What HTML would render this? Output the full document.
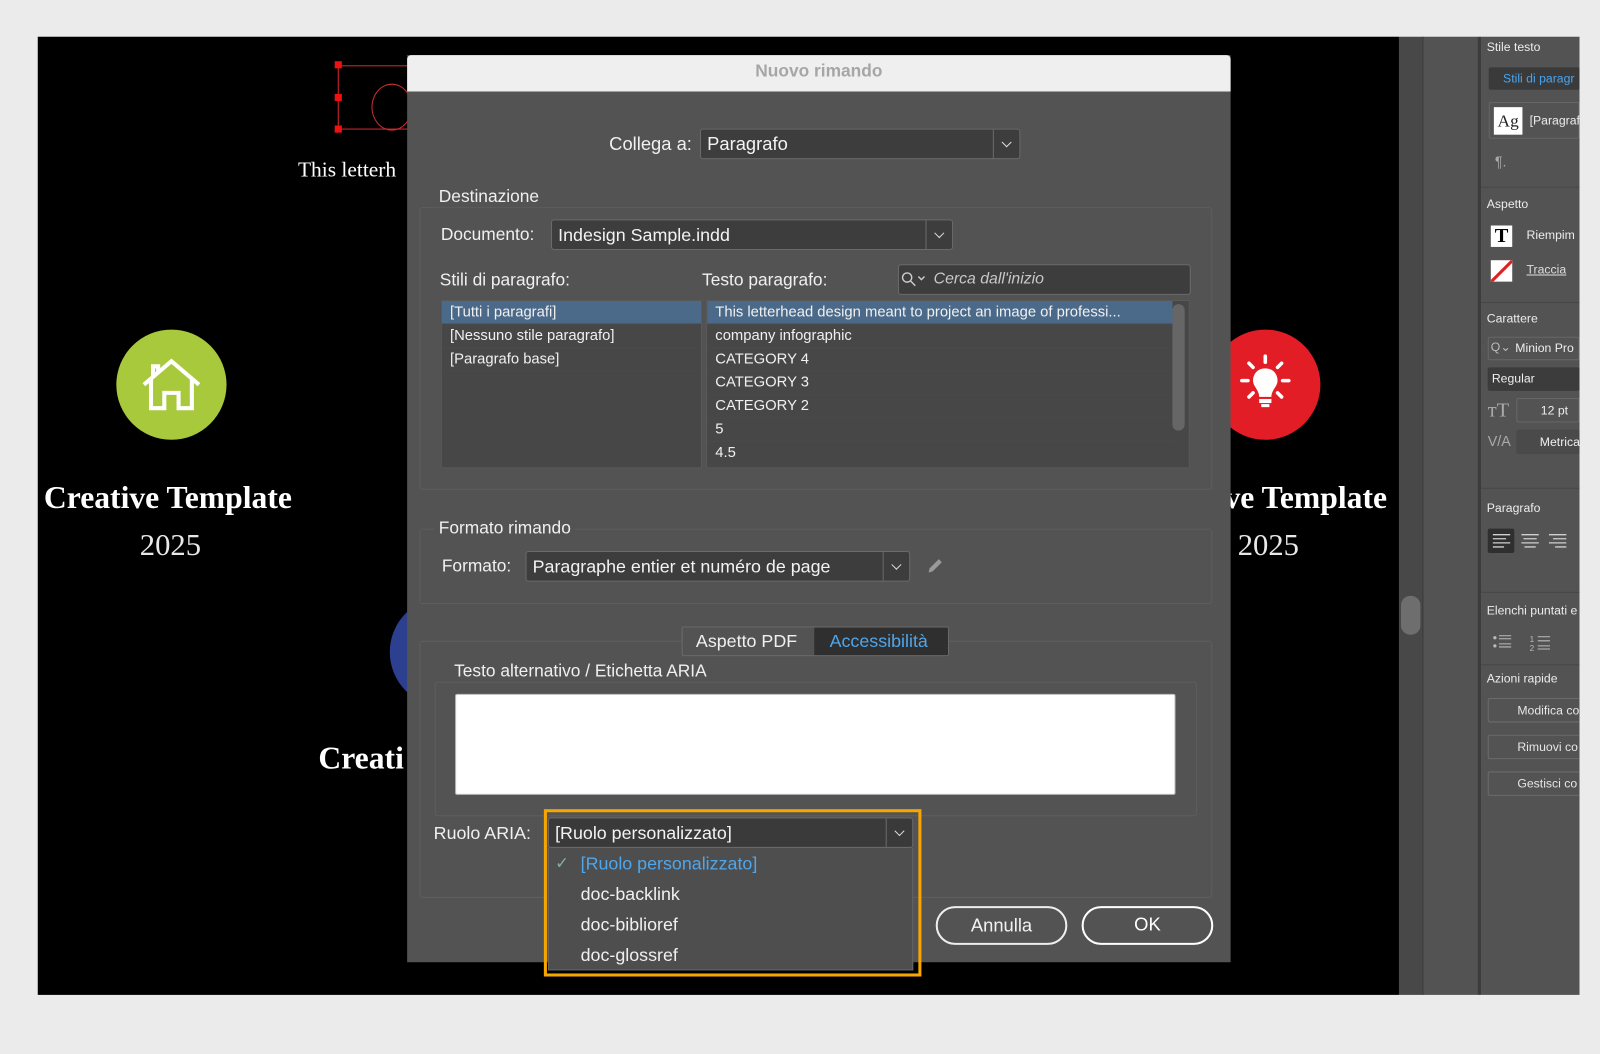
<!DOCTYPE html>
<html><head><meta charset="utf-8"><style>
*{box-sizing:border-box;margin:0;padding:0}
body{width:1600px;height:1033px;background:#ebebeb;position:relative;overflow:hidden;font-family:"Liberation Sans",sans-serif;}
#w{position:absolute;left:0;top:0;width:1568px;height:1013px;transform:scale(1.0204);transform-origin:0 0}
.a{position:absolute}
.ui{font-family:"Liberation Sans",sans-serif;color:#f0f0f0;white-space:nowrap}
.serif{font-family:"Liberation Serif",serif;color:#fff;white-space:nowrap}
.fld{position:absolute;background:#3d3d3d;border:1px solid #6a6a6a;border-radius:3px;color:#f3f3f3;font-size:17px;padding-left:6px;line-height:28px;white-space:nowrap}
.dd{position:absolute;right:0;top:0;bottom:0;width:26px;border-left:1px solid #6a6a6a;}
.dd:after{content:"";position:absolute;left:9px;top:9px;width:6px;height:6px;border-right:1.5px solid #ddd;border-bottom:1.5px solid #ddd;transform:rotate(45deg)}
.box{position:absolute;border:1px solid #5e5e5e;border-radius:3px}
.row{height:23px;line-height:23px;font-size:14.5px;color:#f0f0f0;border-bottom:1px solid #4a4a4a;padding-left:8px;white-space:nowrap}
.pbtn{position:absolute;left:1458px;width:100px;height:24px;border:1px solid #6b6b6b;border-radius:2px;color:#e6e6e6;font-size:12px;line-height:22px;padding-left:28px;white-space:nowrap}
.pl{position:absolute;left:1457px;font-size:12px;color:#ececec;white-space:nowrap}
</style></head><body><div id="w">
<div class="a" style="left:37px;top:36px;width:1334px;height:939px;background:#000"></div>
<div class="a" style="left:331px;top:64px;width:80px;height:63px;border:1px solid #d42a2a;border-right:none"></div>
<div class="a" style="left:328px;top:60px;width:7px;height:7px;background:#f01010"></div>
<div class="a" style="left:328px;top:92px;width:7px;height:7px;background:#f01010"></div>
<div class="a" style="left:328px;top:123px;width:7px;height:7px;background:#f01010"></div>
<div class="a" style="left:364px;top:82px;width:40px;height:46px;border:1px solid #c83030;border-radius:50%"></div>
<div class="a serif" style="left:292px;top:154px;font-size:21px">This letterh</div>
<div class="a" style="left:114px;top:323px;width:108px;height:108px;border-radius:50%;background:#a8c93c"></div>
<svg class="a" style="left:136px;top:350px" width="64" height="54" viewBox="0 0 64 54"><path d="M5 27 L32 4 L59 27 M12 21 V50 H25 V35 H39 V50 H52 V21 M14 19 V9 H19 V14" fill="none" stroke="#fff" stroke-width="4" stroke-linejoin="miter"/></svg>
<div class="a serif" style="left:43px;top:470px;font-size:31px;font-weight:bold">Creative Template</div>
<div class="a serif" style="left:137px;top:518px;font-size:30px;font-weight:100;color:#e8e8e8">2025</div>
<div class="a" style="left:382px;top:585px;width:108px;height:108px;border-radius:50%;background:#2d3f8f"></div>
<div class="a serif" style="left:312px;top:725px;font-size:31px;font-weight:bold">Creati</div>
<div class="a" style="left:1186px;top:323px;width:108px;height:108px;border-radius:50%;background:#e31d25"></div>
<svg class="a" style="left:1212px;top:345px" width="56" height="60" viewBox="0 0 56 60"><g stroke="#fff" stroke-width="3.5" stroke-linecap="round"><line x1="28" y1="4" x2="28" y2="10"/><line x1="12" y1="11" x2="16" y2="15"/><line x1="44" y1="11" x2="40" y2="15"/><line x1="5" y1="28" x2="11" y2="28"/><line x1="45" y1="28" x2="51" y2="28"/><line x1="12" y1="44" x2="16" y2="40"/><line x1="44" y1="44" x2="40" y2="40"/></g><path d="M28 16 C20 16 16 22 16 28 C16 34 22 37 22 44 H34 C34 37 40 34 40 28 C40 22 36 16 28 16Z" fill="#fff"/><rect x="22" y="46" width="12" height="4" fill="#fff"/><rect x="24" y="51" width="8" height="3" fill="#fff"/></svg>
<div class="a serif" style="left:1200px;top:470px;font-size:31px;font-weight:bold">ve Template</div>
<div class="a serif" style="left:1213px;top:518px;font-size:30px;font-weight:100;color:#e8e8e8">2025</div>

<div class="a" style="left:1371px;top:36px;width:24px;height:939px;background:#484848;border-right:1px solid #3a3a3a"></div>
<div class="a" style="left:1373px;top:584px;width:19px;height:38px;border-radius:9px;background:#6e6e6e"></div>
<div class="a" style="left:1395px;top:36px;width:53px;height:939px;background:#535353"></div>
<div class="a" style="left:1448px;top:36px;width:4px;height:939px;background:#3c3c3c"></div>
<div class="a" style="left:1452px;top:36px;width:96px;height:939px;background:#535353"></div>
<div class="pl" style="top:39px">Stile testo</div>
<div class="a" style="left:1459px;top:66px;width:89px;height:22px;background:#3a3a3a;border-radius:2px;color:#4aa4ee;font-size:12px;line-height:22px;padding-left:14px;white-space:nowrap;overflow:hidden">Stili di paragr</div>
<div class="a" style="left:1459px;top:100px;width:89px;height:36px;border:1px solid #666;border-radius:2px"></div>
<div class="a" style="left:1464px;top:105px;width:28px;height:27px;background:#fff;color:#222;font-family:'Liberation Serif',serif;font-size:17px;text-align:center;line-height:27px">Ag</div>
<div class="pl" style="left:1499px;top:111px">[Paragraf</div>
<div class="pl" style="left:1465px;top:150px;color:#aaa;font-size:14px">¶.</div>
<div class="a" style="left:1452px;top:183px;width:96px;height:1px;background:#474747"></div>
<div class="pl" style="top:193px">Aspetto</div>
<div class="a" style="left:1461px;top:221px;width:21px;height:21px;background:#fff;color:#000;font-family:'Liberation Serif',serif;font-weight:bold;font-size:20px;text-align:center;line-height:21px">T</div>
<div class="pl" style="left:1496px;top:223px">Riempim</div>
<div class="a" style="left:1461px;top:255px;width:21px;height:21px;background:#fff;overflow:hidden"><div style="position:absolute;left:-4px;top:9px;width:30px;height:3px;background:#e02020;transform:rotate(-45deg)"></div></div>
<div class="pl" style="left:1496px;top:257px;text-decoration:underline;color:#ddd">Traccia</div>
<div class="a" style="left:1452px;top:296px;width:96px;height:1px;background:#474747"></div>
<div class="pl" style="top:305px">Carattere</div>
<div class="a" style="left:1458px;top:330px;width:90px;height:23px;border:1px solid #666;border-radius:2px;color:#eee;font-size:12px;line-height:21px;padding-left:26px;white-space:nowrap">Minion Pro</div>
<div class="pl" style="left:1461px;top:333px;color:#bbb">Q⌄</div>
<div class="a" style="left:1458px;top:360px;width:90px;height:23px;background:#3c3c3c;border-radius:2px;color:#eee;font-size:12px;line-height:23px;padding-left:4px">Regular</div>
<div class="pl" style="left:1458px;top:391px;font-family:'Liberation Serif',serif;font-size:20px;color:#aaa">ᴛT</div>
<div class="a" style="left:1486px;top:390px;width:62px;height:24px;border:1px solid #666;border-radius:2px;color:#eee;font-size:12px;line-height:22px;padding-left:23px">12 pt</div>
<div class="pl" style="left:1458px;top:424px;color:#aaa;font-size:14px">V/A</div>
<div class="a" style="left:1486px;top:421px;width:62px;height:24px;border-radius:2px;background:#4a4a4a;color:#eee;font-size:12px;line-height:24px;padding-left:23px">Metrica</div>
<div class="a" style="left:1452px;top:478px;width:96px;height:1px;background:#474747"></div>
<div class="pl" style="top:491px">Paragrafo</div>
<div class="a" style="left:1458px;top:518px;width:26px;height:24px;background:#2f2f2f;border-radius:2px"></div>
<svg class="a" style="left:1462px;top:522px" width="86" height="16"><g stroke="#cfcfcf" stroke-width="1.3"><path d="M1 2h17M1 6h13M1 10h17M1 14h11"/><path d="M29 2h17M31 6h13M29 10h17M32 14h11"/><path d="M56 2h17M60 6h13M56 10h17M62 14h11"/></g></svg>
<div class="a" style="left:1452px;top:580px;width:96px;height:1px;background:#474747"></div>
<div class="pl" style="top:591px">Elenchi puntati e</div>
<svg class="a" style="left:1462px;top:620px" width="60" height="20"><g fill="#bbb"><circle cx="3" cy="5" r="1.6"/><circle cx="3" cy="13" r="1.6"/></g><g stroke="#bbb" stroke-width="1"><path d="M7 3h12M7 6h12M7 11h12M7 14h12M45 4h12M45 8h12M45 13h12M45 16h12"/></g><text x="37" y="9" font-size="8" fill="#bbb" font-family="Liberation Sans">1</text><text x="37" y="18" font-size="8" fill="#bbb" font-family="Liberation Sans">2</text></svg>
<div class="a" style="left:1452px;top:651px;width:96px;height:1px;background:#474747"></div>
<div class="pl" style="top:658px">Azioni rapide</div>
<div class="pbtn" style="top:684px">Modifica co</div>
<div class="pbtn" style="top:720px">Rimuovi co</div>
<div class="pbtn" style="top:756px">Gestisci co</div>
<div class="a" style="left:1548px;top:36px;width:52px;height:997px;background:#ebebeb"></div>

<div class="a" style="left:399px;top:54px;width:807px;height:889px;background:#535353"></div>
<div class="a" style="left:399px;top:54px;width:807px;height:36px;background:#efefef;border-radius:4px 4px 0 0;border-bottom:1px solid #bbb;text-align:center;line-height:32px;font-size:17px;font-weight:bold;color:#a6a6a6">Nuovo rimando</div>

<div class="a ui" style="left:597px;top:131px;font-size:18px">Collega a:</div>
<div class="fld" style="left:686px;top:126px;width:314px;height:30px;font-size:18px">Paragrafo<div class="dd"></div></div>

<div class="box" style="left:411px;top:203px;width:777px;height:277px"></div>
<div class="a ui" style="left:426px;top:183px;font-size:17px;background:#535353;padding:0 4px">Destinazione</div>
<div class="a ui" style="left:432px;top:220px;font-size:17px">Documento:</div>
<div class="fld" style="left:540px;top:215px;width:394px;height:30px;font-size:17.5px">Indesign Sample.indd<div class="dd"></div></div>
<div class="a ui" style="left:431px;top:265px;font-size:17px">Stili di paragrafo:</div>
<div class="a ui" style="left:688px;top:265px;font-size:17px">Testo paragrafo:</div>
<div class="fld" style="left:880px;top:259px;width:287px;height:30px;padding-left:34px;font-style:italic;color:#c8c8c8;font-size:15.5px">Cerca dall'inizio</div>
<svg class="a" style="left:883px;top:266px" width="30" height="16"><circle cx="6" cy="6" r="4.5" fill="none" stroke="#ccc" stroke-width="1.4"/><path d="M9.5 9.5 L14 14 M17 5 l3 3 l3 -3" stroke="#ccc" stroke-width="1.4" fill="none"/></svg>
<div class="a" style="left:432px;top:294px;width:256px;height:165px;background:#474747;border:1px solid #5a5a5a">
 <div class="row" style="background:#4b6a8a">[Tutti i paragrafi]</div>
 <div class="row">[Nessuno stile paragrafo]</div>
 <div class="row">[Paragrafo base]</div>
</div>
<div class="a" style="left:692px;top:294px;width:474px;height:165px;background:#474747;border:1px solid #5a5a5a;overflow:hidden">
 <div style="width:456px">
 <div class="row" style="background:#4b6a8a">This letterhead design meant to project an image of professi...</div>
 <div class="row">company infographic</div>
 <div class="row">CATEGORY 4</div>
 <div class="row">CATEGORY 3</div>
 <div class="row">CATEGORY 2</div>
 <div class="row">5</div>
 <div class="row">4.5</div>
 </div>
 <div class="a" style="right:4px;top:3px;width:12px;height:124px;border-radius:6px;background:#666"></div>
</div>

<div class="box" style="left:411px;top:518px;width:777px;height:74px"></div>
<div class="a ui" style="left:426px;top:508px;font-size:17px;background:#535353;padding:0 4px">Formato rimando</div>
<div class="a ui" style="left:433px;top:545px;font-size:17px">Formato:</div>
<div class="fld" style="left:515px;top:540px;width:377px;height:30px;font-size:17.5px">Paragraphe entier et numéro de page<div class="dd"></div></div>
<svg class="a" style="left:907px;top:546px" width="18" height="18"><path d="M3 15 L4 11 L13 2 L16 5 L7 14 Z" fill="#9a9a9a"/></svg>

<div class="box" style="left:411px;top:628px;width:777px;height:252px"></div>
<div class="a" style="left:668px;top:614px;width:262px;height:29px;border:1px solid #6a6a6a;border-radius:2px;background:#535353"></div>
<div class="a" style="left:798px;top:615px;width:131px;height:27px;background:#2f2f2f"></div>
<div class="a ui" style="left:682px;top:618px;font-size:17.5px">Aspetto PDF</div>
<div class="a ui" style="left:813px;top:618px;font-size:17.5px;color:#4ea6ec">Accessibilità</div>
<div class="box" style="left:426px;top:668px;width:747px;height:132px"></div>
<div class="a ui" style="left:441px;top:648px;font-size:17px;background:#535353;padding:0 4px">Testo alternativo / Etichetta ARIA</div>
<div class="a" style="left:446px;top:680px;width:706px;height:99px;background:#fff;border:1px solid #bbb;border-radius:2px"></div>
<div class="a ui" style="left:425px;top:806px;font-size:17.5px">Ruolo ARIA:</div>

<div class="a" style="left:917px;top:888px;width:129px;height:38px;border:2px solid #eee;border-radius:19px;color:#f2f2f2;font-size:18px;text-align:center;line-height:34px">Annulla</div>
<div class="a" style="left:1060px;top:888px;width:129px;height:38px;border:2.5px solid #fff;border-radius:19px;color:#fff;font-size:18px;text-align:center;line-height:33px">OK</div>

<div class="a" style="left:533px;top:793px;width:370px;height:164px;border:3px solid #f7a500"></div>
<div class="fld" style="left:537px;top:801px;width:358px;height:30px;font-size:17.5px;background:#3a3a3a">[Ruolo personalizzato]<div class="dd"></div></div>
<div class="a" style="left:537px;top:831px;width:358px;height:120px;background:#4e4e4e;border:1px solid #666;border-top:none"></div>
<div class="a ui" style="left:544px;top:836px;font-size:16px;color:#8aa;">✓</div>
<div class="a ui" style="left:569px;top:836px;font-size:17.5px;color:#4ea6ec">[Ruolo personalizzato]</div>
<div class="a ui" style="left:569px;top:866px;font-size:17.5px">doc-backlink</div>
<div class="a ui" style="left:569px;top:896px;font-size:17.5px">doc-biblioref</div>
<div class="a ui" style="left:569px;top:926px;font-size:17.5px">doc-glossref</div>
</div></body></html>
